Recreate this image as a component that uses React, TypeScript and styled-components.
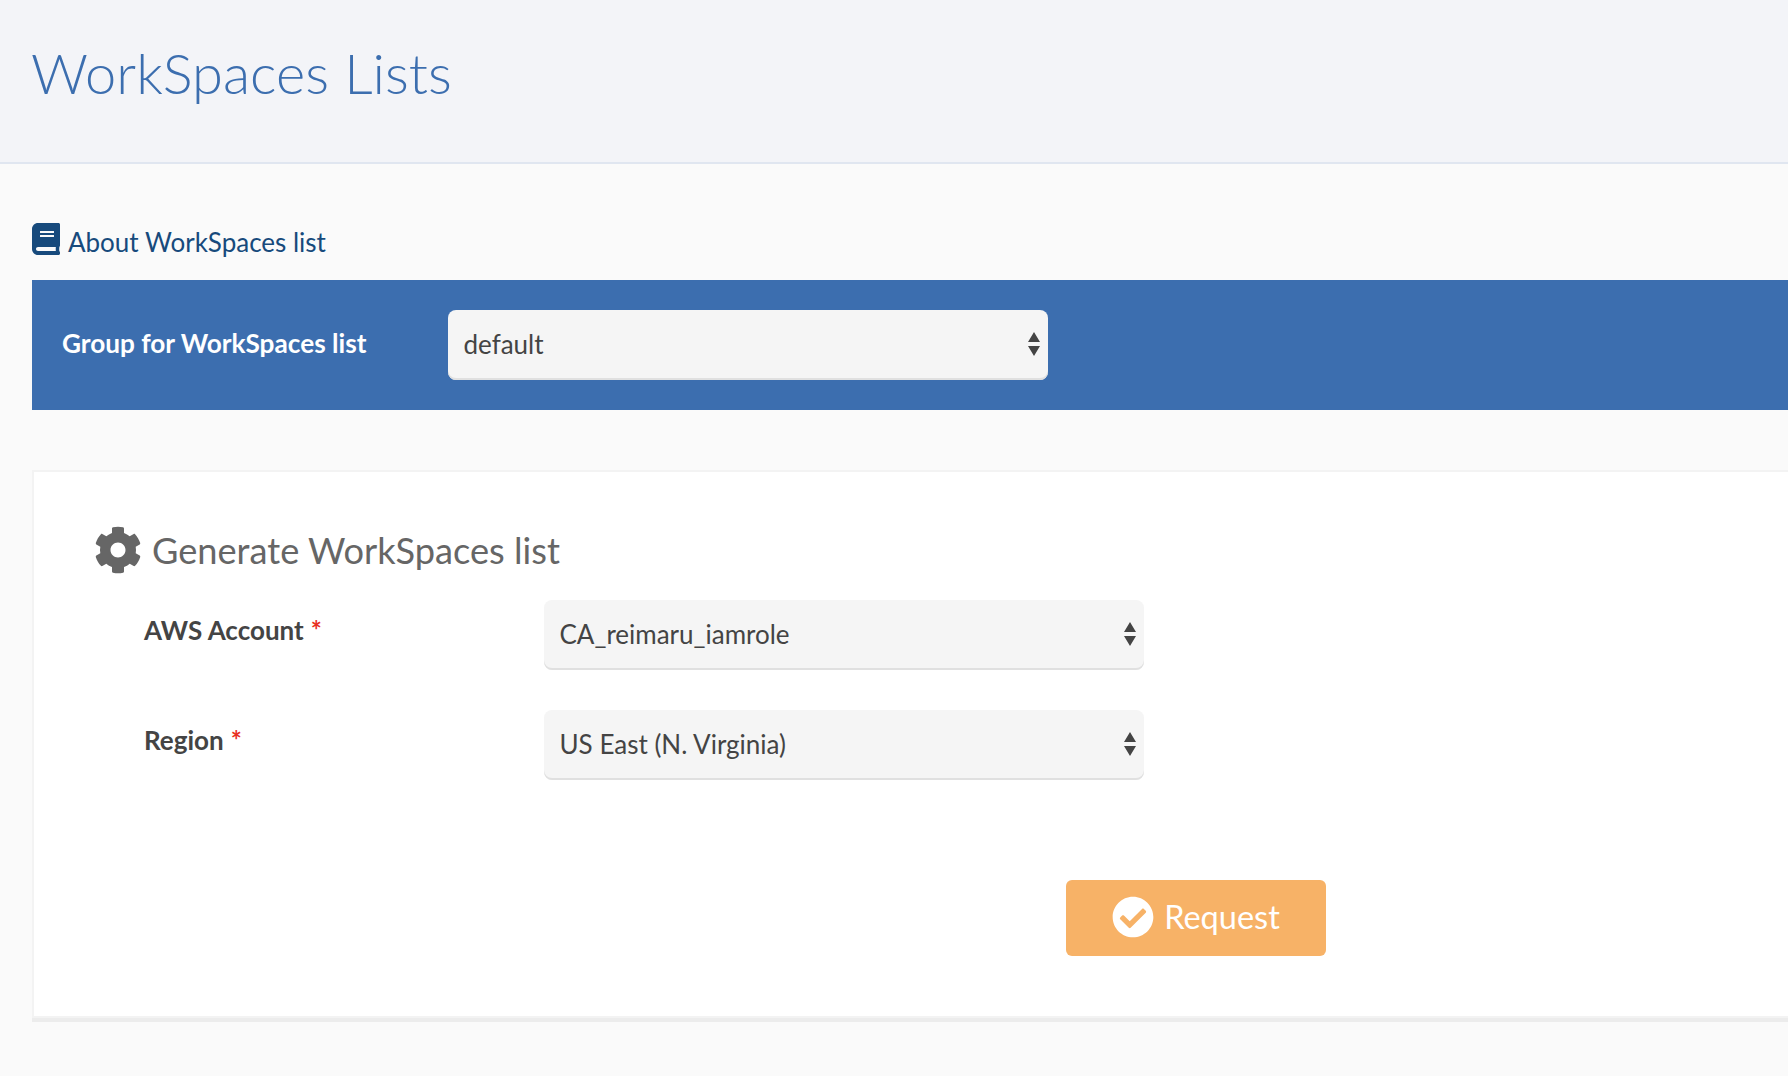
import React from "react";
import styled, { createGlobalStyle } from "styled-components";
import { FaBook, FaCog, FaCheckCircle } from "react-icons/fa";

const Global = createGlobalStyle`
  html, body { margin: 0; padding: 0; background: #fafafa; overflow: hidden; }
  body { font-family: Lato, "Open Sans", sans-serif; width: 1788px; height: 1076px; }
`;

const Page = styled.div`
  width: 1788px;
  height: 1076px;
  overflow: hidden;
  background: #fafafa;
`;

const Header = styled.header`
  height: 164px;
  box-sizing: border-box;
  padding: 33px 0 0 31px;
  background: #f3f4f8;
  border-bottom: 2px solid #e0e6f0;
`;

const Title = styled.h1`
  margin: 0;
  font-size: 56px;
  line-height: 80px;
  font-weight: 300;
  color: #3c6eaf;
`;

const Content = styled.main`
  padding: 58px 0 0 32px;
`;

const DocLink = styled.a`
  display: flex;
  align-items: center;
  gap: 8px;
  height: 34px;
  font-size: 26px;
  color: #174a7c;
  text-decoration: none;
`;

const BookIcon = styled(FaBook)`
  width: 28px;
  height: 32px;
`;

const DocText = styled.span`
  margin-top: 6px;
`;

const GroupBar = styled.section`
  display: flex;
  align-items: center;
  margin-top: 24px;
  height: 130px;
  padding-left: 30px;
  background: #3c6eaf;
`;

const GroupLabel = styled.label`
  width: 386px;
  font-size: 26.2px;
  font-weight: 700;
  color: #fff;
  margin-top: -5px;
`;

const SelectWrap = styled.div<{ $width: number }>`
  position: relative;
  width: ${(p) => p.$width}px;
  height: 70px;
`;

const Select = styled.select`
  appearance: none;
  display: block;
  width: 100%;
  height: 100%;
  padding: 0 40px 2px 15.5px;
  box-sizing: border-box;
  border: 0;
  border-radius: 8px;
  background: #f5f5f5;
  box-shadow: inset 0 -2px 0 #e0e0e0;
  font-family: inherit;
  font-size: 26px;
  color: #444;
  outline: none;
`;

const Arrows = styled.svg`
  position: absolute;
  right: 8px;
  top: 22px;
  width: 12px;
  height: 24px;
`;

const Panel = styled.section`
  margin-top: 60px;
  height: 548px;
  box-sizing: border-box;
  padding: 55px 0 0 60px;
  background: #fff;
  border: 2px solid #f3f3f3;
  border-right: 0;
  box-shadow: 0 4px 0 #ececec;
`;

const PanelTitle = styled.h2`
  display: flex;
  align-items: center;
  gap: 10px;
  margin: 0;
  height: 46px;
  font-size: 36.2px;
  font-weight: 400;
  color: #666;
`;

const Fields = styled.div`
  margin-top: 27px;
  padding-left: 50px;
  display: flex;
  flex-direction: column;
  gap: 40px;
`;

const Field = styled.div`
  display: grid;
  grid-template-columns: 400px 600px;
`;

const FieldLabel = styled.label`
  font-size: 26px;
  line-height: 60px;
  font-weight: 700;
  color: #444;
`;

const Required = styled.span`
  color: #e8301f;
  margin-left: 7px;
  font-size: 26px;
`;

const Actions = styled.div`
  margin: 100px 0 0 972px;
`;

const RequestButton = styled.button`
  display: flex;
  align-items: center;
  justify-content: center;
  gap: 10px;
  width: 260px;
  height: 76px;
  padding: 0 6px 3px;
  box-sizing: border-box;
  border: 0;
  border-radius: 6px;
  background: #f7b267;
  color: #fff;
  font-family: inherit;
  font-size: 32.5px;
`;

const SelectBox = ({ value, width }: { value: string; width: number }) => (
  <SelectWrap $width={width}>
    <Select defaultValue={value}>
      <option>{value}</option>
    </Select>
    <Arrows viewBox="0 0 12 24">
      <path d="M6 0 L12 10 H0 Z M0 14 H12 L6 24 Z" fill="#444" />
    </Arrows>
  </SelectWrap>
);

export default function App() {
  return (
    <Page>
      <Global />
      <Header>
        <Title>WorkSpaces Lists</Title>
      </Header>
      <Content>
        <DocLink href="#">
          <BookIcon />
          <DocText>About WorkSpaces list</DocText>
        </DocLink>
        <GroupBar>
          <GroupLabel>Group for WorkSpaces list</GroupLabel>
          <SelectBox value="default" width={600} />
        </GroupBar>
        <Panel>
          <PanelTitle>
            <FaCog size={48} />
            Generate WorkSpaces list
          </PanelTitle>
          <Fields>
            <Field>
              <FieldLabel>
                AWS Account<Required>*</Required>
              </FieldLabel>
              <SelectBox value="CA_reimaru_iamrole" width={600} />
            </Field>
            <Field>
              <FieldLabel>
                Region<Required>*</Required>
              </FieldLabel>
              <SelectBox value="US East (N. Virginia)" width={600} />
            </Field>
          </Fields>
          <Actions>
            <RequestButton>
              <FaCheckCircle size={42} />
              Request
            </RequestButton>
          </Actions>
        </Panel>
      </Content>
    </Page>
  );
}
